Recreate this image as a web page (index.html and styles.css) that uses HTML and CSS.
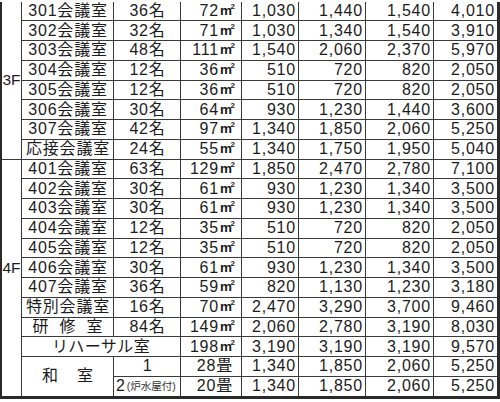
FILE: index.html
```html
<!DOCTYPE html>
<html lang="ja">
<head>
<meta charset="utf-8">
<title>会議室料金表</title>
<link rel="stylesheet" href="styles.css">
</head>
<body>
<div class="sheet">
  <div class="floor f3">3F</div>
  <div class="c nm">301会議室</div><div class="c cap">36名</div><div class="c ar">72<span class="u">m<span class="s">2</span></span></div><div class="c pr">1,030</div><div class="c pr">1,440</div><div class="c pr">1,540</div><div class="c pr">4,010</div>
  <div class="c nm">302会議室</div><div class="c cap">32名</div><div class="c ar">71<span class="u">m<span class="s">2</span></span></div><div class="c pr">1,030</div><div class="c pr">1,340</div><div class="c pr">1,540</div><div class="c pr">3,910</div>
  <div class="c nm">303会議室</div><div class="c cap">48名</div><div class="c ar">111<span class="u">m<span class="s">2</span></span></div><div class="c pr">1,540</div><div class="c pr">2,060</div><div class="c pr">2,370</div><div class="c pr">5,970</div>
  <div class="c nm">304会議室</div><div class="c cap">12名</div><div class="c ar">36<span class="u">m<span class="s">2</span></span></div><div class="c pr">510</div><div class="c pr">720</div><div class="c pr">820</div><div class="c pr">2,050</div>
  <div class="c nm">305会議室</div><div class="c cap">12名</div><div class="c ar">36<span class="u">m<span class="s">2</span></span></div><div class="c pr">510</div><div class="c pr">720</div><div class="c pr">820</div><div class="c pr">2,050</div>
  <div class="c nm">306会議室</div><div class="c cap">30名</div><div class="c ar">64<span class="u">m<span class="s">2</span></span></div><div class="c pr">930</div><div class="c pr">1,230</div><div class="c pr">1,440</div><div class="c pr">3,600</div>
  <div class="c nm">307会議室</div><div class="c cap">42名</div><div class="c ar">97<span class="u">m<span class="s">2</span></span></div><div class="c pr">1,340</div><div class="c pr">1,850</div><div class="c pr">2,060</div><div class="c pr">5,250</div>
  <div class="c nm">応接会議室</div><div class="c cap">24名</div><div class="c ar">55<span class="u">m<span class="s">2</span></span></div><div class="c pr">1,340</div><div class="c pr">1,750</div><div class="c pr">1,950</div><div class="c pr">5,040</div>

  <div class="floor f4">4F</div>
  <div class="c nm">401会議室</div><div class="c cap">63名</div><div class="c ar">129<span class="u">m<span class="s">2</span></span></div><div class="c pr">1,850</div><div class="c pr">2,470</div><div class="c pr">2,780</div><div class="c pr">7,100</div>
  <div class="c nm">402会議室</div><div class="c cap">30名</div><div class="c ar">61<span class="u">m<span class="s">2</span></span></div><div class="c pr">930</div><div class="c pr">1,230</div><div class="c pr">1,340</div><div class="c pr">3,500</div>
  <div class="c nm">403会議室</div><div class="c cap">30名</div><div class="c ar">61<span class="u">m<span class="s">2</span></span></div><div class="c pr">930</div><div class="c pr">1,230</div><div class="c pr">1,340</div><div class="c pr">3,500</div>
  <div class="c nm">404会議室</div><div class="c cap">12名</div><div class="c ar">35<span class="u">m<span class="s">2</span></span></div><div class="c pr">510</div><div class="c pr">720</div><div class="c pr">820</div><div class="c pr">2,050</div>
  <div class="c nm">405会議室</div><div class="c cap">12名</div><div class="c ar">35<span class="u">m<span class="s">2</span></span></div><div class="c pr">510</div><div class="c pr">720</div><div class="c pr">820</div><div class="c pr">2,050</div>
  <div class="c nm">406会議室</div><div class="c cap">30名</div><div class="c ar">61<span class="u">m<span class="s">2</span></span></div><div class="c pr">930</div><div class="c pr">1,230</div><div class="c pr">1,340</div><div class="c pr">3,500</div>
  <div class="c nm">407会議室</div><div class="c cap">36名</div><div class="c ar">59<span class="u">m<span class="s">2</span></span></div><div class="c pr">820</div><div class="c pr">1,130</div><div class="c pr">1,230</div><div class="c pr">3,180</div>
  <div class="c nm">特別会議室</div><div class="c cap">16名</div><div class="c ar">70<span class="u">m<span class="s">2</span></span></div><div class="c pr">2,470</div><div class="c pr">3,290</div><div class="c pr">3,700</div><div class="c pr">9,460</div>
  <div class="c nm spread">研修室</div><div class="c cap">84名</div><div class="c ar">149<span class="u">m<span class="s">2</span></span></div><div class="c pr">2,060</div><div class="c pr">2,780</div><div class="c pr">3,190</div><div class="c pr">8,030</div>

  <div class="c wide">リハーサル室</div><div class="c ar">198<span class="u">m<span class="s">2</span></span></div><div class="c pr">3,190</div><div class="c pr">3,190</div><div class="c pr">3,190</div><div class="c pr">9,570</div>
  <div class="c nm washitsu">和室</div><div class="c cap">1</div><div class="c ar">28畳</div><div class="c pr">1,340</div><div class="c pr">1,850</div><div class="c pr">2,060</div><div class="c pr">5,250</div>
  <div class="c cap sub">2<span class="note">(炉水屋付)</span></div><div class="c ar">20畳</div><div class="c pr">1,340</div><div class="c pr">1,850</div><div class="c pr">2,060</div><div class="c pr">5,250</div>
</div>
</body>
</html>
```
FILE: styles.css
```css
html, body {
  margin: 0;
  padding: 0;
  background: #ffffff;
}

body {
  width: 500px;
  height: 402px;
  overflow: hidden;
  font-family: "Liberation Sans", "Noto Sans CJK JP", sans-serif;
  color: #1c1c1c;
}

.sheet {
  box-sizing: border-box;
  width: 500px;
  margin-top: 1.5px;
  display: grid;
  grid-template-columns: 19px 91px 66px 60px 56px 66px 67px 63px;
  grid-template-rows: repeat(20, 18.75px);
  gap: 1px;
  background: #3a3a3a;
  border-style: solid;
  border-color: #2a2a2a;
  border-width: 0 3px 3px 2px;
}

.c, .floor {
  background: #ffffff;
  display: flex;
  align-items: center;
  font-size: 16px;
  line-height: 18px;
  letter-spacing: 0.8px;
  white-space: nowrap;
  overflow: hidden;
}

.floor {
  grid-column: 1;
  justify-content: center;
  letter-spacing: 0;
  font-size: 15.5px;
}

.f3 { grid-row: span 8; }
.f4 {
  grid-row: span 12;
  padding-bottom: 19px;
}

.nm {
  justify-content: center;
  padding-left: 1px;
}

.spread {
  letter-spacing: 11px;
  padding-left: 11px;
}

.cap {
  justify-content: center;
  padding-left: 1px;
}

.ar {
  justify-content: flex-end;
  padding-right: 8px;
}

.pr {
  justify-content: flex-end;
  padding-right: 2px;
}

.wide {
  grid-column: span 2;
  justify-content: center;
  letter-spacing: 0.4px;
}

.washitsu {
  grid-row: span 2;
  letter-spacing: 19px;
  padding-left: 19px;
}

.sub {
  justify-content: flex-start;
  padding-left: 2px;
}

.note {
  font-size: 10.5px;
  letter-spacing: 0;
  margin-left: 1px;
  color: #333333;
}

.u {
  position: relative;
  display: inline-block;
  font-weight: bold;
  font-size: 13.5px;
  letter-spacing: 0;
  margin-left: 1px;
  padding-right: 1px;
}

.u .s {
  position: absolute;
  right: -2px;
  top: -4px;
  font-size: 8px;
  font-weight: bold;
}
```
